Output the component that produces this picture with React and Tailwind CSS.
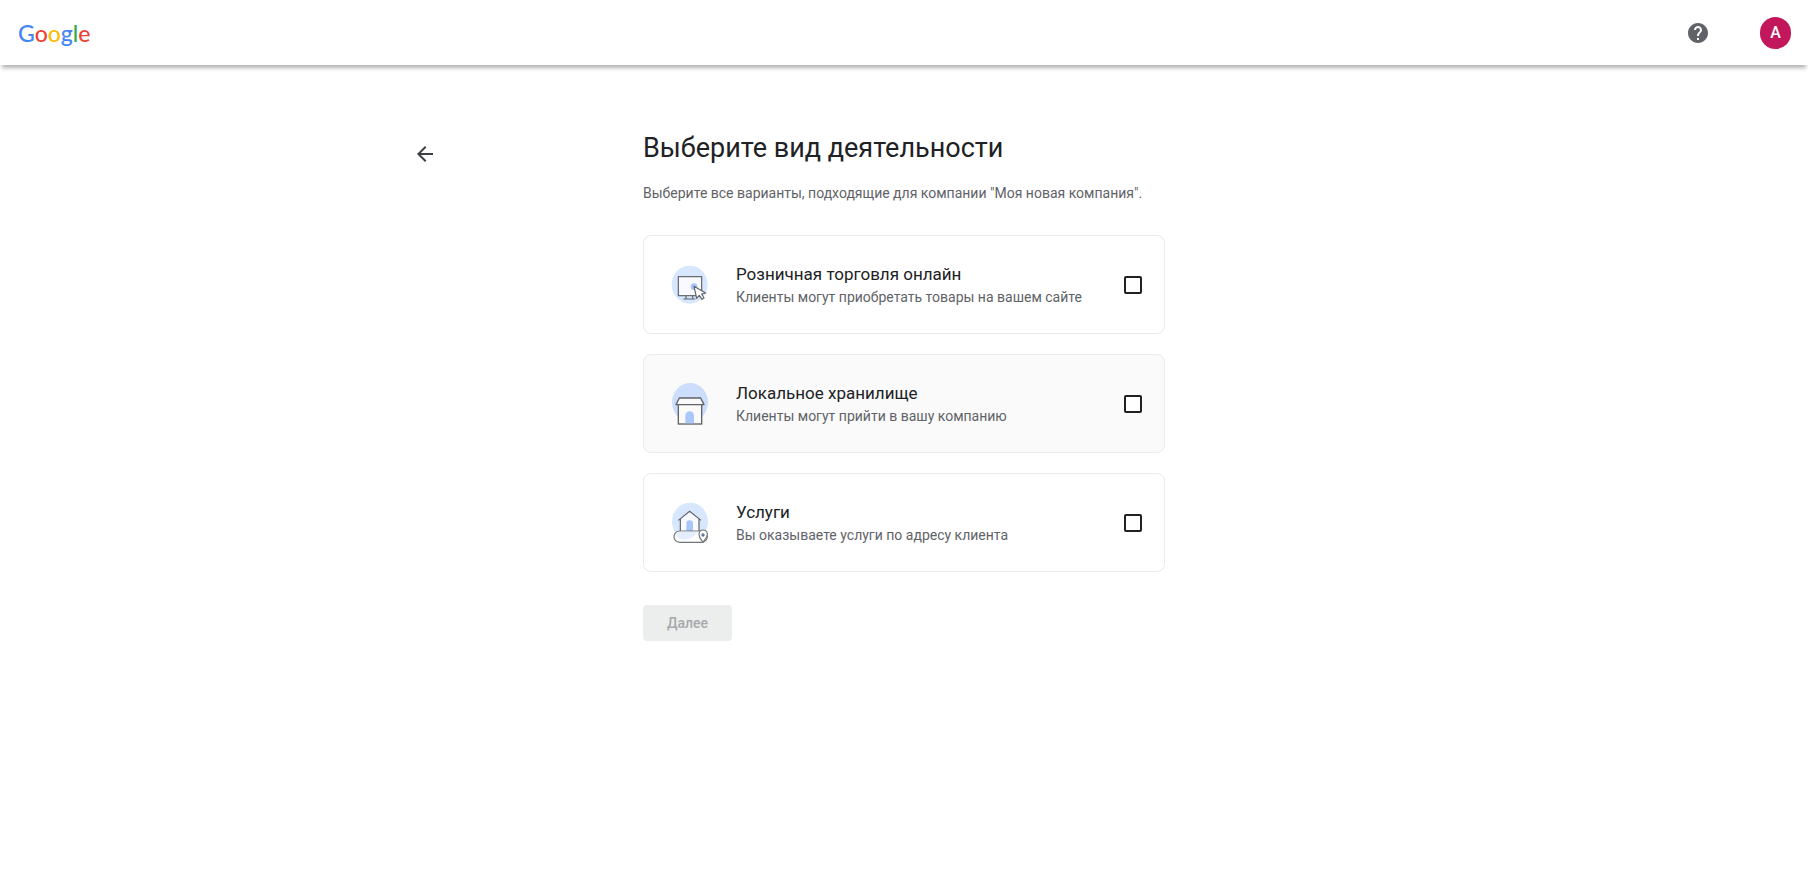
import React, { useState } from 'react';

const OnlineRetailIcon = () => (
  <svg viewBox="90 98 120 132" className="h-11 w-10 shrink-0" fill="none" aria-hidden="true">
    <ellipse cx="149" cy="163" rx="54" ry="57" fill="#d7e7fd" />
    <rect x="115" y="139" width="70" height="57" fill="#f8faff" stroke="#5f6368" strokeWidth="3.5" />
    <path d="M138 197v8M158 197v8M130 206h36" stroke="#5f6368" strokeWidth="3.5" />
    <circle cx="162" cy="169" r="10" fill="#a8c7fa" />
    <path
      d="M162 168l8 36 8-9 8 12 6-4-7-12 12-3z"
      fill="#fff"
      stroke="#5f6368"
      strokeWidth="3.5"
      strokeLinejoin="round"
    />
  </svg>
);

const LocalStoreIcon = () => (
  <svg viewBox="90 95 120 132" className="h-11 w-10 shrink-0" fill="none" aria-hidden="true">
    <ellipse cx="150" cy="156" rx="54" ry="58" fill="#ccdefb" />
    <rect x="115" y="160" width="70" height="61" fill="#fafafa" stroke="#5f6368" strokeWidth="4" />
    <path d="M118 143h64l10 20H108z" fill="#fafafa" stroke="#5f6368" strokeWidth="4" strokeLinejoin="round" />
    <path d="M136 219v-23a13 13 0 0 1 26 0v23z" fill="#a8c7fa" />
  </svg>
);

const ServicesIcon = () => (
  <svg viewBox="90 98 120 132" className="h-11 w-10 shrink-0" fill="none" aria-hidden="true">
    <ellipse cx="150" cy="160" rx="54" ry="57" fill="#d7e7fd" />
    <path d="M121 152l28-22 28 22v36h-56z" fill="#f8faff" />
    <path d="M115 156l34-27 34 27M121 152v36M177 152v36" stroke="#5f6368" strokeWidth="3.5" />
    <path d="M139 188v-22a10 10 0 0 1 20 0v22z" fill="#a8c7fa" />
    <rect x="102" y="188" width="100" height="34" rx="17" fill="#fff" stroke="#70757a" strokeWidth="3.5" />
    <path d="M122 190h48c-3 12-20 24-36 24-14 0-24-6-24-14 0-6 6-10 12-10z" fill="#e3edfd" />
    <path
      d="M189 222c-4-6-12-13-12-24a12.500 13 0 0 1 25 0c0 11-9 18-13 24z"
      fill="#fff"
      stroke="#70757a"
      strokeWidth="3.5"
      strokeLinejoin="round"
    />
    <circle cx="189" cy="200" r="5" fill="#5f7694" />
  </svg>
);

const businessTypes = [
  {
    id: 'online',
    title: 'Розничная торговля онлайн',
    description: 'Клиенты могут приобретать товары на вашем сайте',
    icon: OnlineRetailIcon,
    background: 'bg-white',
  },
  {
    id: 'local',
    title: 'Локальное хранилище',
    description: 'Клиенты могут прийти в вашу компанию',
    icon: LocalStoreIcon,
    background: 'bg-[#fafafa]',
  },
  {
    id: 'services',
    title: 'Услуги',
    description: 'Вы оказываете услуги по адресу клиента',
    icon: ServicesIcon,
    background: 'bg-white',
  },
];

const Header = () => (
  <header className="flex h-[65px] items-center justify-between bg-white pl-[18px] pr-[17px] shadow-[0_5px_4px_-2px_rgba(0,0,0,0.3)]">
    <a href="#" aria-label="Google" className="font-[Lato,sans-serif] text-[23px] font-medium leading-8">
      <span className="text-[#4285f4]">G</span>
      <span className="text-[#ea4335]">o</span>
      <span className="text-[#fbbc05]">o</span>
      <span className="text-[#4285f4]">g</span>
      <span className="text-[#34a853]">l</span>
      <span className="text-[#ea4335]">e</span>
    </a>
    <div className="flex items-center gap-[50px]">
      <button type="button" aria-label="Справка">
        <svg viewBox="0 0 24 24" className="size-6" fill="#5f6368">
          <path d="M12 2C6.480 2 2 6.480 2 12s4.480 10 10 10 10-4.480 10-10S17.520 2 12 2zm1 17h-2v-2h2v2zm2.070-7.750-.9.920C13.450 12.900 13 13.500 13 15h-2v-.5c0-1.100.45-2.100 1.170-2.830l1.240-1.260c.37-.36.59-.86.59-1.410 0-1.100-.9-2-2-2s-2 .9-2 2H8c0-2.210 1.790-4 4-4s4 1.790 4 4c0 .88-.36 1.680-.93 2.250z" />
        </svg>
      </button>
      <button
        type="button"
        aria-label="Аккаунт"
        className="flex h-8 w-[31px] items-center justify-center rounded-full bg-[#c2185b] font-medium text-white"
      >
        A
      </button>
    </div>
  </header>
);

const BusinessTypeCard = ({ type, checked, onChange }) => {
  const Icon = type.icon;

  return (
    <label
      className={`flex h-[99px] cursor-pointer items-center rounded-lg border border-[#e9ebed] pl-[26px] pr-[22px] ${type.background}`}
    >
      <Icon />
      <span className="ml-[26px] flex flex-1 flex-col gap-px pb-px">
        <span className="text-[17px] leading-6 text-[#202124]">{type.title}</span>
        <span className="text-sm leading-5 text-[#5f6368]">{type.description}</span>
      </span>
      <input
        type="checkbox"
        checked={checked}
        onChange={onChange}
        className="size-[18px] appearance-none rounded-xs border-2 border-[#202124] bg-white checked:bg-[#1a73e8]"
      />
    </label>
  );
};

const App = () => {
  const [selected, setSelected] = useState([]);

  const toggle = (id) => {
    setSelected((prev) => (prev.includes(id) ? prev.filter((item) => item !== id) : [...prev, id]));
  };

  return (
    <div className="min-h-screen bg-white font-[Roboto,sans-serif]">
      <Header />
      <main className="mx-auto grid max-w-[982px] grid-cols-[1fr_minmax(0,522px)_1fr] pt-[63px]">
        <div className="pt-[14px]">
          <button type="button" aria-label="Назад">
            <svg viewBox="0 0 24 24" className="size-6" fill="#3c4043">
              <path d="M20 11H7.830l5.590-5.590L12 4l-8 8 8 8 1.410-1.410L7.830 13H20v-2z" />
            </svg>
          </button>
        </div>
        <div>
          <h1 className="text-[27px] leading-10 text-[#202124]">Выберите вид деятельности</h1>
          <p className="mt-[15px] text-sm leading-5 text-[#5f6368]">
            Выберите все варианты, подходящие для компании "Моя новая компания".
          </p>
          <div className="mt-8 flex flex-col gap-5">
            {businessTypes.map((type) => (
              <BusinessTypeCard
                key={type.id}
                type={type}
                checked={selected.includes(type.id)}
                onChange={() => toggle(type.id)}
              />
            ))}
          </div>
          <button
            type="button"
            disabled={selected.length === 0}
            className="mt-[33px] h-9 rounded bg-[#1a73e8] px-6 text-sm font-medium text-white disabled:bg-[#eceeee] disabled:text-[#a6a9ab]"
          >
            Далее
          </button>
        </div>
      </main>
    </div>
  );
};

export default App;
